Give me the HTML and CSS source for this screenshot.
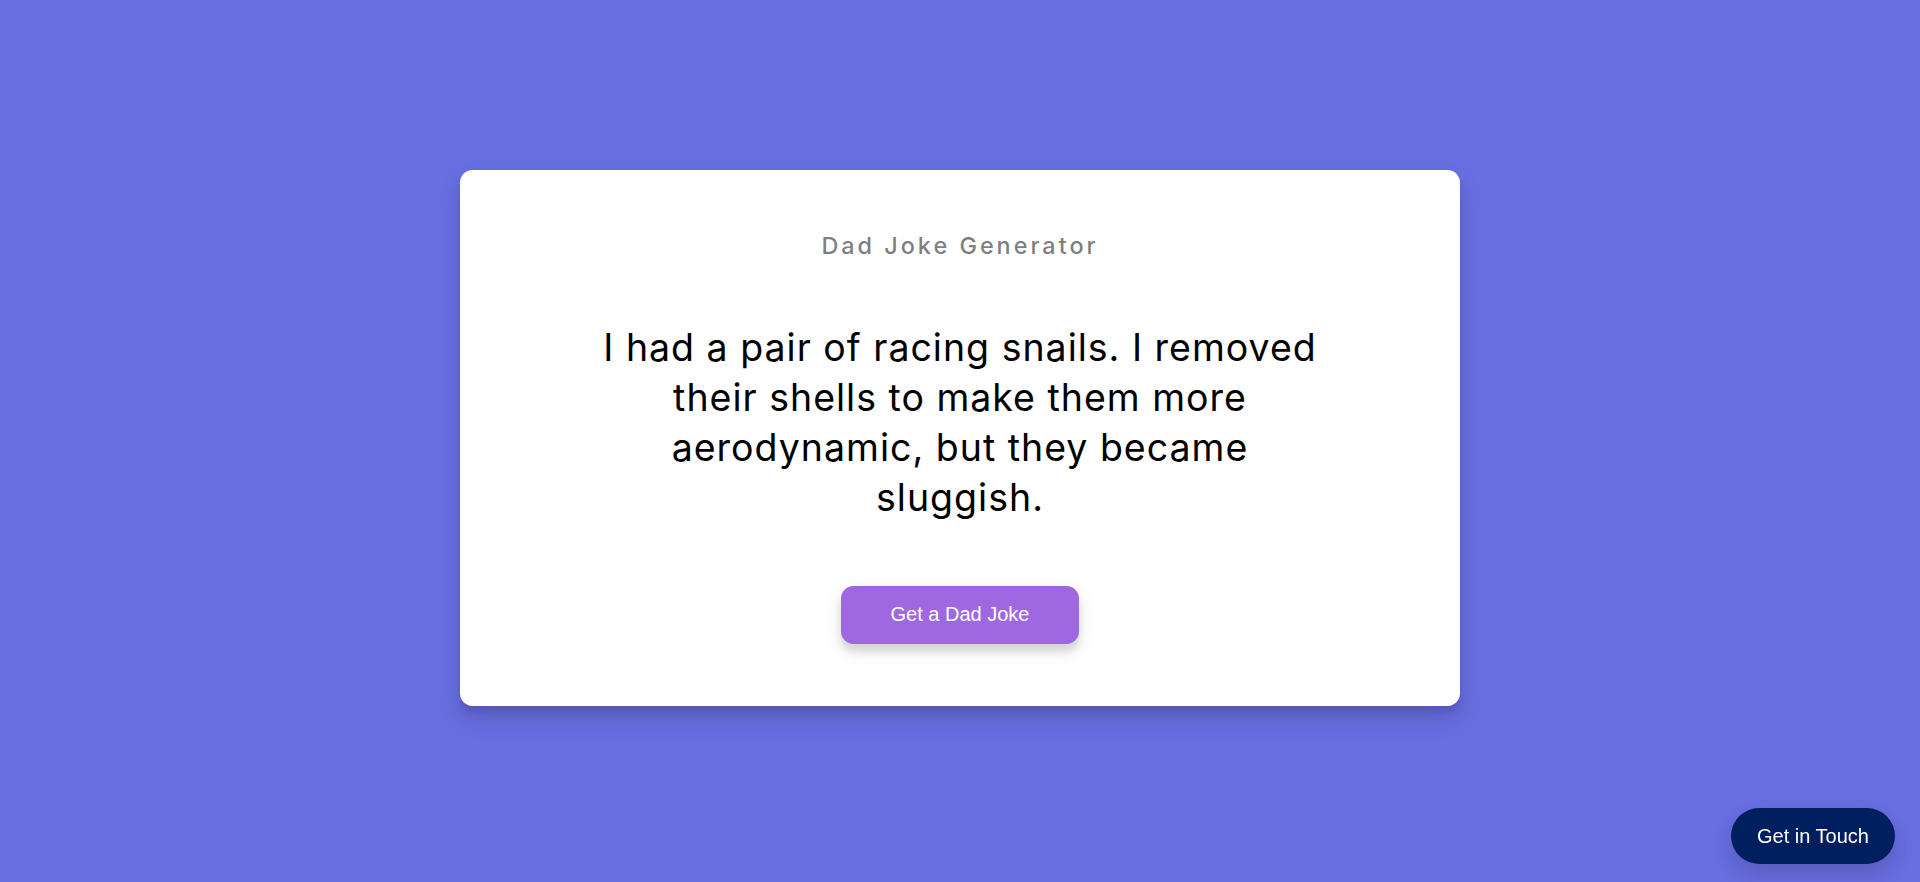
FILE: index.html
```html
<!DOCTYPE html>
<html lang="en">
<head>
<meta charset="UTF-8">
<title>Dad Jokes</title>
<link rel="stylesheet" href="styles.css">
</head>
<body>
<main class="card">
  <h3 class="card-title">Dad Joke Generator</h3>
  <p class="joke">I had a pair of racing snails. I removed their shells to make them more aerodynamic, but they became sluggish.</p>
  <button class="btn">Get a Dad Joke</button>
</main>
<a class="contact" href="#">Get in Touch</a>
</body>
</html>
```
FILE: styles.css
```css
* { box-sizing: border-box; }

html, body { margin: 0; }

body {
  background-color: #686de0;
  font-family: Inter, "Open Sans", sans-serif;
  height: 882px;
  overflow: hidden;
  display: flex;
  flex-direction: column;
  align-items: center;
  justify-content: center;
  padding-bottom: 6px;
}

.card {
  width: 1000px;
  background: #ffffff;
  border-radius: 12.5px;
  box-shadow: 0 12.5px 25px rgba(0, 0, 0, 0.1), 0 7.5px 7.5px rgba(0, 0, 0, 0.1);
  padding: 62.5px 25px;
  text-align: center;
}

.card-title {
  margin: 0;
  font-size: 23.4px;
  line-height: 28.5px;
  font-weight: 500;
  letter-spacing: 3px;
  color: #000;
  opacity: 0.5;
}

.joke {
  font-size: 37.5px;
  line-height: 50px;
  letter-spacing: 1px;
  font-weight: 400;
  color: #000;
  max-width: 740px;
  margin: 62.5px auto;
}

.btn {
  background-color: #9f68e0;
  color: #fff;
  border: 0;
  border-radius: 12.5px;
  box-shadow: 0 6.25px 18.75px rgba(0, 0, 0, 0.1), 0 7.5px 7.5px rgba(0, 0, 0, 0.1);
  padding: 17.5px 50px;
  font-family: "Liberation Sans", Arial, sans-serif;
  font-size: 20px;
  line-height: 23px;
  cursor: pointer;
}

.contact {
  position: fixed;
  right: 25px;
  bottom: 18px;
  height: 56px;
  padding: 0 26px;
  display: flex;
  align-items: center;
  border-radius: 28px;
  background: #001f5f;
  color: #fff;
  text-decoration: none;
  font-family: "Liberation Sans", Arial, sans-serif;
  font-size: 20px;
  box-shadow: 0 10px 20px rgba(0, 0, 0, 0.15);
}
```
